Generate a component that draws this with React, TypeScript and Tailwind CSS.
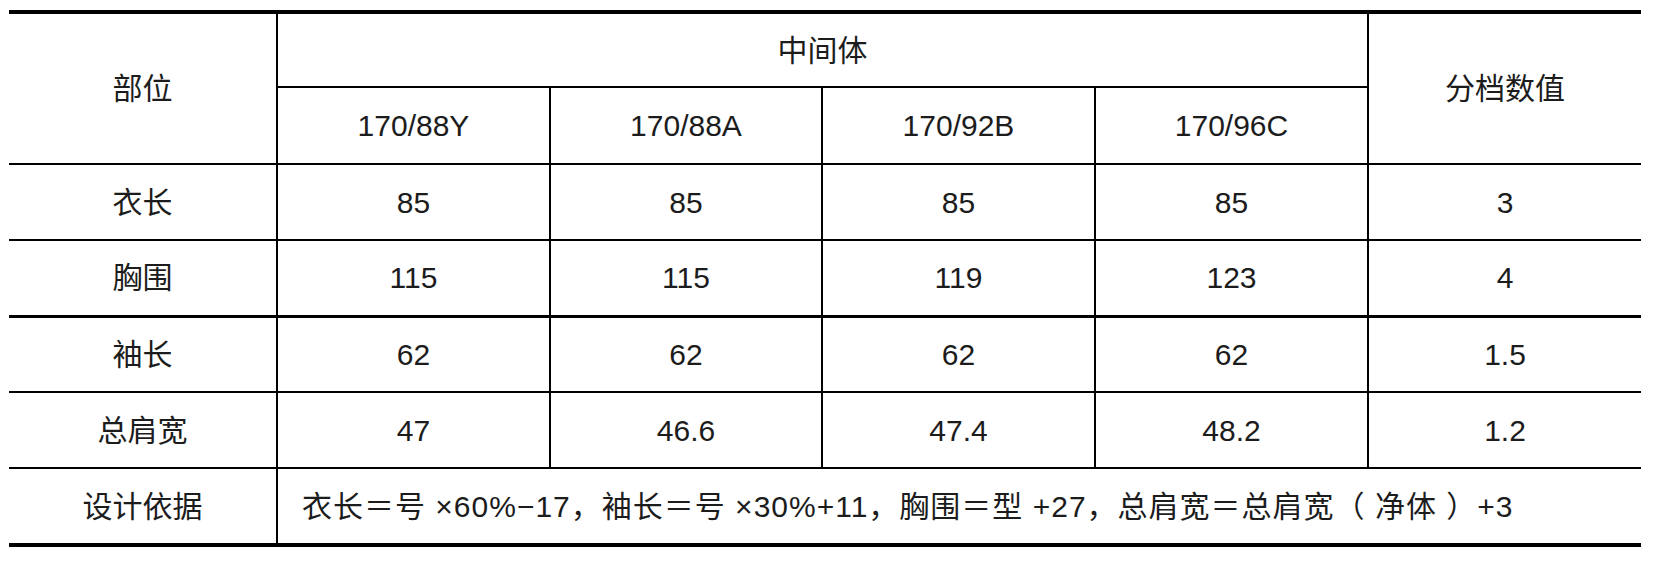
const COLS = ['170/88Y', '170/88A', '170/92B', '170/96C']

const ROWS = [
  { name: '衣长', values: ['85', '85', '85', '85'], step: '3', thick: false },
  { name: '胸围', values: ['115', '115', '119', '123'], step: '4', thick: true },
  { name: '袖长', values: ['62', '62', '62', '62'], step: '1.5', thick: false },
  { name: '总肩宽', values: ['47', '46.6', '47.4', '48.2'], step: '1.2', thick: false },
]

const cell = 'border-black text-center align-middle font-normal p-0'

export default function App() {
  return (
    <div
      className="w-[1653px] h-[565px] bg-white pt-[10px] pl-[9px] text-[#1c1c1c]"
      style={{ fontFamily: '"Liberation Sans", "Noto Sans CJK SC", sans-serif' }}
    >
      <table className="w-[1632px] table-fixed border-collapse text-[30px] border-t-4 border-b-4 border-black">
        <colgroup>
          <col className="w-[268px]" />
          <col className="w-[273px]" />
          <col className="w-[272px]" />
          <col className="w-[273px]" />
          <col className="w-[273px]" />
          <col className="w-[273px]" />
        </colgroup>
        <thead>
          <tr className="h-[75px]">
            <th rowSpan={2} className={`${cell} border-r-2 border-b-2`}>
              部位
            </th>
            <th colSpan={4} className={`${cell} border-r-2 border-b-2`}>
              中间体
            </th>
            <th rowSpan={2} className={`${cell} border-b-2`}>
              分档数值
            </th>
          </tr>
          <tr className="h-[77px]">
            {COLS.map((c) => (
              <th key={c} className={`${cell} border-r-2 border-b-2`}>
                {c}
              </th>
            ))}
          </tr>
        </thead>
        <tbody>
          {ROWS.map((row) => {
            const b = row.thick ? 'border-b-[3px]' : 'border-b-2'
            return (
              <tr key={row.name} className="h-[76px]">
                <td className={`${cell} border-r-2 ${b}`}>{row.name}</td>
                {row.values.map((v, i) => (
                  <td key={i} className={`${cell} border-r-2 ${b}`}>
                    {v}
                  </td>
                ))}
                <td className={`${cell} ${b}`}>{row.step}</td>
              </tr>
            )
          })}
          <tr className="h-[77px]">
            <td className={`${cell} border-r-2`}>设计依据</td>
            <td colSpan={5} className="p-0 pl-[24px] text-left align-middle tracking-[1px]">
              衣长＝号 ×60%−17，袖长＝号 ×30%+11，胸围＝型 +27，总肩宽＝总肩宽（ 净体 ）+3
            </td>
          </tr>
        </tbody>
      </table>
    </div>
  )
}
